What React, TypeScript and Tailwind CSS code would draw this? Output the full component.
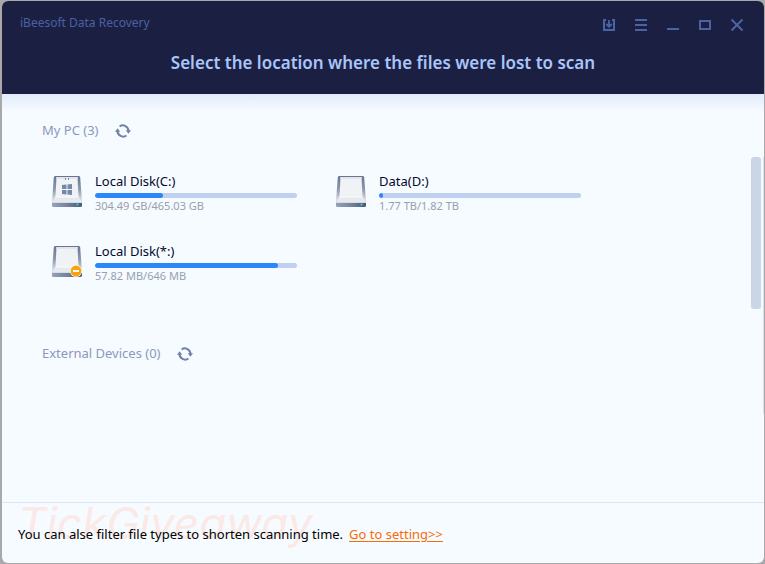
import React from "react";

type Disk = {
  name: string;
  usage: string;
  percent: number;
  badge?: "system" | "locked";
};

const disks: Disk[] = [
  { name: "Local Disk(C:)", usage: "304.49 GB/465.03 GB", percent: 33.7, badge: "system" },
  { name: "Data(D:)", usage: "1.77 TB/1.82 TB", percent: 2 },
  { name: "Local Disk(*:)", usage: "57.82 MB/646 MB", percent: 90.6, badge: "locked" },
];

function DriveIcon({ badge }: { badge?: Disk["badge"] }) {
  return (
    <svg width="30" height="33" viewBox="0 0 30 33" className="shrink-0" aria-hidden="true">
      <defs>
        <linearGradient id="side" x1="0" y1="0" x2="0" y2="1">
          <stop offset="0" stopColor="#66758d" />
          <stop offset="0.45" stopColor="#8f9bb0" />
          <stop offset="0.75" stopColor="#d3d8e1" />
        </linearGradient>
        <linearGradient id="front" x1="0" y1="0" x2="1" y2="0">
          <stop offset="0" stopColor="#94a3ba" />
          <stop offset="0.5" stopColor="#74849d" />
          <stop offset="1" stopColor="#4a5a74" />
        </linearGradient>
      </defs>
      <path d="M3 1H27Q28 1 28.2 2.5L30 26V30.5Q30 32 28 32H2Q0 32 0 30.5V26L1.8 2.5Q2 1 3 1Z" fill="url(#side)" />
      <path d="M4.5 2H25.5L26.5 21.5L29.5 27H0.5L3.5 21.5Z" fill="#f1f2f5" />
      <path d="M4.5 2H25.5L25.7 4H4.3Z" fill="#e2e6ec" />
      <path d="M3.5 22H26.5L29.5 27H0.5Z" fill="#e6e9ee" />
      <path d="M3.5 22H26.5" stroke="#fbfcfd" />
      <path d="M0 28H30V30.5Q30 32 28 32H2Q0 32 0 30.5Z" fill="url(#front)" />
      <path d="M0.3 27.5H29.7" stroke="#d5dce6" />
      <circle cx="25.5" cy="29.5" r="1.1" fill="#35d0e4" />
      {badge === "system" && (
        <g fill="#7488a8">
          <path d="M13 3H14V5H13ZM16 3H17V5H16Z" />
          <path d="M10 10L14.5 9.5V14H10ZM15.5 9.4L20 9V14H15.5ZM10 15H14.5V19.5L10 19ZM15.5 15H20V20L15.5 19.6Z" />
        </g>
      )}
      {badge === "locked" && (
        <g>
          <circle cx="24" cy="26" r="6" fill="#fff" />
          <circle cx="24" cy="26" r="5.4" fill="#faa20a" />
          <path d="M21 25H27V27H21Z" fill="#fff" />
        </g>
      )}
    </svg>
  );
}

function SectionHeading({ title }: { title: string }) {
  return (
    <div className="flex items-center gap-4">
      <h2 className="text-[13px] leading-5 text-[#8a99bd]">{title}</h2>
      <button type="button" aria-label={`Refresh ${title}`} className="mt-0.5">
        <svg width="16" height="14" viewBox="0 0 16 14" fill="none" aria-hidden="true">
          <path d="M4.6 2.5A5.6 5.6 0 0 1 13.5 7M11.4 11.5A5.6 5.6 0 0 1 2.5 7" stroke="#7182a6" strokeWidth="2" />
          <path d="M10.8 6.2H16L13.4 9.8ZM0 7.8H5.2L2.6 4.2Z" fill="#7182a6" />
        </svg>
      </button>
    </div>
  );
}

function DiskItem({ disk }: { disk: Disk }) {
  return (
    <li className="flex h-[70px] w-[284px] gap-[13px] pl-2.5">
      <div className="pt-1">
        <DriveIcon badge={disk.badge} />
      </div>
      <div className="w-[202px]">
        <h3 className="text-[13px] leading-5 text-[#05082c]">{disk.name}</h3>
        <div className="mt-0.5 h-[5px] overflow-hidden rounded-full bg-[#bfd1ef]">
          <div className="h-full rounded-full bg-[#2d87fb]" style={{ width: `${disk.percent}%` }} />
        </div>
        <p className="text-[11px] leading-4 text-[#97a0b3]">{disk.usage}</p>
      </div>
    </li>
  );
}

const windowControls = [
  { label: "Download", path: "M4 3H2V13H12V3H10", arrow: "M7 3V9M4.2 7L7 9.8L9.8 7" },
  { label: "Menu", path: "M1 3H13M1 8H13M1 13H13" },
  { label: "Minimize", path: "M1 12H13" },
  { label: "Maximize", path: "M2 4H12V12H2Z" },
  { label: "Close", path: "M1.5 2.5L12.5 13.5M12.5 2.5L1.5 13.5" },
];

export default function App() {
  return (
    <div className="flex min-h-screen bg-[#a9a9ac] pt-px pr-px pb-px pl-0.5 font-['Noto_Sans','Open_Sans',sans-serif]">
      <div className="flex flex-1 flex-col overflow-hidden rounded-md bg-[#f6fbff]">
        <header className="h-[93px] bg-[#1b2042]">
          <div className="flex h-11 items-center justify-between pr-5 pl-[18px]">
            <span className="text-[12px] text-[#4a60a2]">iBeesoft Data Recovery</span>
            <div className="flex gap-[18px] pt-1">
              {windowControls.map((control) => (
                <button key={control.label} type="button" aria-label={control.label}>
                  <svg width="14" height="16" viewBox="0 0 14 16" fill="none" stroke="#4c63a3" strokeWidth="2" aria-hidden="true">
                    <path d={control.path} />
                    {control.arrow && <path d={control.arrow} strokeWidth="1.8" />}
                  </svg>
                </button>
              ))}
            </div>
          </div>
          <h1 className="text-center text-[17px] leading-9 font-semibold text-[#a9c5fa]">
            Select the location where the files were lost to scan
          </h1>
        </header>

        <main className="flex flex-1 bg-linear-to-b from-[#e3ecfb] to-[#f6fbff] to-[18px]">
          <div className="flex-1 pt-[26px] pl-10">
            <section>
              <SectionHeading title="My PC (3)" />
              <ul className="flex flex-wrap pt-[31px]">
                {disks.map((disk) => (
                  <DiskItem key={disk.name} disk={disk} />
                ))}
              </ul>
            </section>
            <section className="pt-8">
              <SectionHeading title="External Devices (0)" />
            </section>
          </div>
          <div className="flex gap-0.5 pt-[63px]">
            <div className="h-[152px] w-2.5 rounded-[3px] bg-[#cad5e5]" />
            <div className="h-[257px] w-px bg-[#dbe1ed]" />
          </div>
        </main>

        <footer className="relative flex h-[61px] items-center gap-1.5 border-t border-[#dce4f5] px-4 pt-0.5 text-[13px] leading-5">
          <span aria-hidden="true" className="absolute -top-2 left-4 font-['Inter','Lato',sans-serif] text-[44px] leading-[56px] text-[#fbe9e7] italic">
            TickGiveaway
          </span>
          <p className="relative text-black">You can alse filter file types to shorten scanning time.</p>
          <a href="#setting" className="relative text-[#fa6b05] underline underline-offset-2">
            Go to setting&gt;&gt;
          </a>
        </footer>
      </div>
    </div>
  );
}
